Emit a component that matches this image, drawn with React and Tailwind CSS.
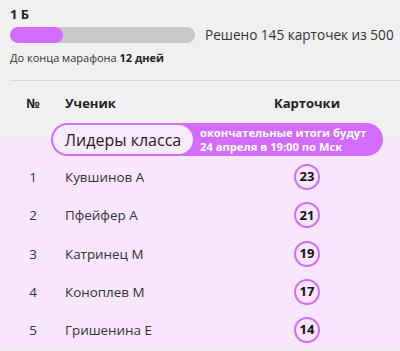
import React from 'react';

const rows = [
  { n: 1, name: 'Кувшинов А', cards: 23 },
  { n: 2, name: 'Пфейфер А', cards: 21 },
  { n: 3, name: 'Катринец М', cards: 19 },
  { n: 4, name: 'Коноплев М', cards: 17 },
  { n: 5, name: 'Гришенина Е', cards: 14 },
];

export default function App() {
  return (
    <main className="h-[351px] w-[400px] overflow-hidden bg-[#f0f0f0] font-['Open_Sans',sans-serif] text-[#222]">
      <section className="pl-[10px] pt-[5px]">
        <h1 className="text-[13px] font-bold leading-[18px]">1 Б</h1>
        <div className="mt-[3px] flex items-center">
          <div className="h-[16px] w-[185px] overflow-hidden rounded-full bg-[#c8c8c8]">
            <div className="h-full w-[53px] rounded-full bg-[#d46bff]" />
          </div>
          <p className="ml-[10px] text-[13.6px] leading-[18px] text-[#333]">Решено 145 карточек из 500</p>
        </div>
        <p className="mt-[6px] text-[11px] leading-[16px] text-[#333]">
          До конца марафона <span className="font-bold text-[#222]">12 дней</span>
        </p>
        <div className="mt-[14px] h-px bg-[#d9d9d9]" />
      </section>

      <div className="mt-[13px] flex items-center text-[13px] font-bold leading-[18px]">
        <div className="w-[56px] pl-[10px] text-center">№</div>
        <div className="ml-[9px] flex-1">Ученик</div>
        <div className="mr-[58px] w-[70px] text-center">Карточки</div>
      </div>

      <div className="mt-[11px] bg-[linear-gradient(to_bottom,#f0f0f0_50%,#f7e6fd_50%)] pl-[51px] pr-[17px]">
        <div className="flex h-[33px] items-center rounded-full bg-[#d36bff] p-[2px]">
          <div className="flex h-full w-[140px] items-center justify-center rounded-full bg-[#f7eafd] text-[16px] text-[#1a1a1a]">
            Лидеры класса
          </div>
          <p className="ml-[7px] text-[11.2px] font-bold leading-[14px] text-white">
            окончательные итоги будут
            <br />
            24 апреля в 19:00 по Мск
          </p>
        </div>
      </div>

      <ul className="bg-[#f7e6fd] pt-[2px]">
        {rows.map((r) => (
          <li key={r.n} className="flex h-[38.25px] items-center text-[13.4px] text-[#333]">
            <div className="w-[56px] pl-[10px] text-center">{r.n}</div>
            <div className="ml-[9px] flex-1">{r.name}</div>
            <div className="mr-[58px] flex w-[70px] justify-center">
              <span className="flex h-[26px] w-[26px] items-center justify-center rounded-full border-2 border-[#d36bff] text-[13px] font-bold text-[#111]">
                {r.cards}
              </span>
            </div>
          </li>
        ))}
      </ul>
    </main>
  );
}
